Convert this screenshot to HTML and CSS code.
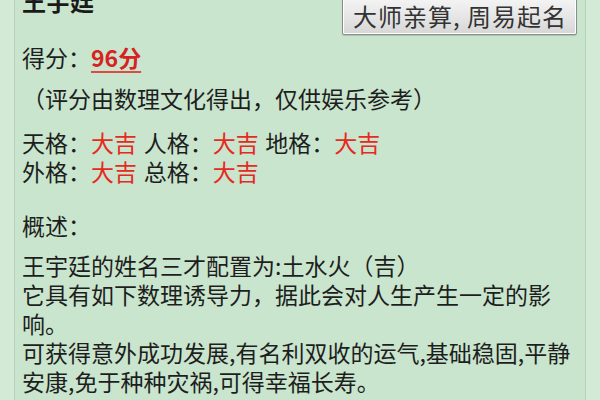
FILE: index.html
```html
<!DOCTYPE html>
<html lang="zh-CN">
<head>
<meta charset="utf-8">
<title>王宇廷</title>
<link rel="stylesheet" href="styles.css">
</head>
<body>
<div class="page">
  <div class="side side-left"></div>
  <div class="main">
    <div class="header">
      <h1 class="name">王宇廷</h1>
      <button class="btn">大师亲算, 周易起名</button>
    </div>
    <p class="score">得分：<span class="score-num">96分</span></p>
    <p class="note">（评分由数理文化得出，仅供娱乐参考）</p>
    <div class="grids">
      <p class="grid-line">天格：<span class="good">大吉</span> 人格：<span class="good">大吉</span> 地格：<span class="good">大吉</span></p>
      <p class="grid-line">外格：<span class="good">大吉</span> 总格：<span class="good">大吉</span></p>
    </div>
    <p class="summary-title">概述：</p>
    <div class="summary">
      王宇廷的姓名三才配置为:土水火（吉）<br>
      它具有如下数理诱导力，据此会对人生产生一定的影<br>响。<br>
      可获得意外成功发展,有名利双收的运气,基础稳固,平静<br>安康,免于种种灾祸,可得幸福长寿。
    </div>
  </div>
  <div class="side side-right"></div>
</div>
</body>
</html>
```

FILE: styles.css
```css
html, body {
  margin: 0;
  padding: 0;
}
body {
  width: 600px;
  height: 400px;
  overflow: hidden;
  background: #d3ebd6;
  font-family: "Noto Sans CJK SC", "Noto Sans", sans-serif;
  color: #1e1e1e;
}
.page {
  display: flex;
  height: 400px;
}
.side {
  flex: none;
  background: #d3ebd6;
}
.side-left {
  width: 14px;
}
.side-right {
  width: 14px;
}
.main {
  flex: 1;
  background: #c9e5cd;
  border-left: 1px solid #b4d3b9;
  border-right: 1px solid #b4d3b9;
  padding-left: 7px;
  padding-right: 7px;
  font-size: 23px;
  line-height: 29px;
  overflow: hidden;
}
p {
  margin: 0;
}
.header {
  display: flex;
  justify-content: space-between;
  align-items: flex-start;
  margin-top: -16px;
}
.name {
  margin: 0;
  font-size: 24px;
  line-height: 34px;
  font-weight: 700;
  color: #1a1a1a;
}
.btn {
  margin-top: 5px;
  margin-right: 1px;
  padding: 10px 9px 2px 10px;
  font-family: "Noto Sans CJK SC", "Noto Sans", sans-serif;
  font-size: 24px;
  line-height: 32px;
  letter-spacing: 1px;
  color: #333;
  background: linear-gradient(#fbfbfb, #e6e6e6 60%, #d6d6d6);
  border: 1px solid #8c8c8c;
  border-radius: 2px;
  box-shadow: inset 0 0 0 1px #ffffff, 0 1px 1px rgba(0,0,0,0.15);
  white-space: nowrap;
}
.score {
  margin-top: 8px;
}
.score-num {
  color: #d8221f;
  font-weight: 700;
  text-decoration: underline;
  text-decoration-color: #e04a44;
  text-decoration-thickness: 2px;
  text-underline-offset: 4px;
}
.note {
  margin-top: 12px;
}
.grids {
  margin-top: 15px;
  word-spacing: 1.5px;
}
.good {
  color: #e52a22;
}
.summary-title {
  margin-top: 25px;
}
.summary {
  margin-top: 11px;
  line-height: 29px;
  white-space: nowrap;
}
```
